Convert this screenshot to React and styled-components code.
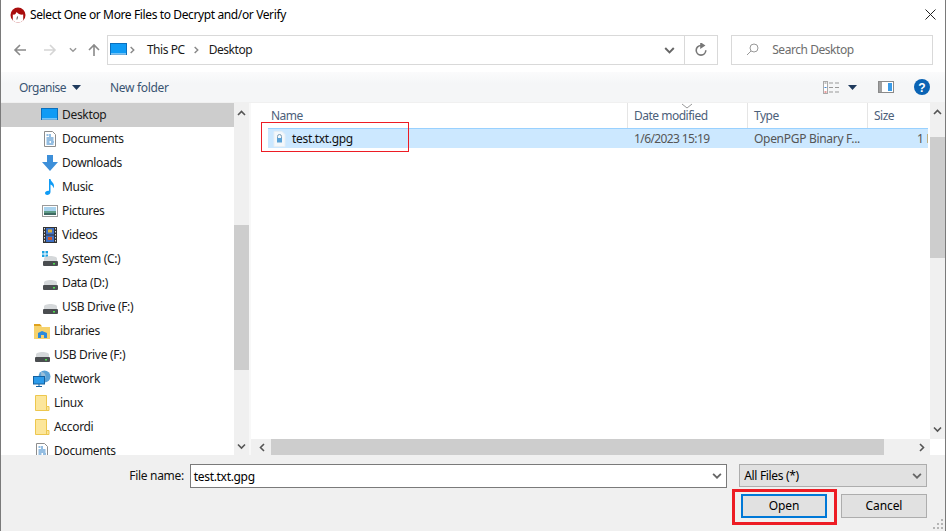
import React from 'react';
import styled, { createGlobalStyle } from 'styled-components';

const Global = createGlobalStyle`
  html, body { margin: 0; padding: 0; background: #fff; }
  * { box-sizing: border-box; }
  body { font-family: "Noto Sans", "Open Sans", "Liberation Sans", sans-serif; font-size: 12px; color: #000; }
`;

const Win = styled.div`
  position: relative; width: 946px; height: 531px; overflow: hidden; background: #fff;
  border-left: 1px solid #7a7a7a; border-right: 1px solid #7a7a7a;
  display: flex; flex-direction: column;
`;
const TitleBar = styled.div`
  height: 30px; display: flex; align-items: center; padding: 0 9px 0 9px; gap: 4px;
`;
const TitleText = styled.div`flex: 1; font-size: 12px; letter-spacing: -0.38px; line-height: 30px;`;
const CloseIcon = styled.svg`width: 11px; height: 11px; margin-bottom: 2px; flex: none;`;
const NavBar = styled.div`
  height: 30px; margin-top: 5px; display: flex; align-items: center; padding-right: 12px;
`;
const NavIcons = styled.div`width: 106px; height: 30px; display: flex; align-items: center; padding-left: 12px;`;
const NavSlot = styled.div`width: ${p => p.$w}px; display: flex; align-items: center; flex: none;`;
const AddressBox = styled.div`
  width: 612px; height: 30px; border: 1px solid #d9d9d9; display: flex; align-items: center; padding-left: 2px; font-size: 12px; color: #1a1a1a;
`;
const Crumb = styled.span`margin: 0 7px 0 ${p => p.$ml}px; padding-bottom: 2px; letter-spacing: -0.45px;`;
const AddressSpacer = styled.div`flex: 1;`;
const AddressAction = styled.div`
  width: ${p => p.$w}px; height: 28px; display: flex; align-items: center; justify-content: center;
  border-left: ${p => (p.$divider ? '1px solid #d9d9d9' : 'none')};
`;
const SearchBox = styled.div`
  width: 202px; height: 30px; margin-left: 13px; border: 1px solid #d9d9d9; display: flex; align-items: center; padding: 0 0 1px 14px; gap: 13px;
  font-size: 12px; color: #6d6d6d; letter-spacing: -0.45px;
`;
const Toolbar = styled.div`
  height: 31px; margin-top: 7px; background: linear-gradient(#fbfbfc, #f5f6f7 40%); display: flex; align-items: center; padding: 0 15px 0 18px; color: #3a5472;
  border-bottom: 1px solid #f0f0f0;
`;
const ToolLabel = styled.span`display: flex; align-items: center; gap: 6px; margin-right: 29px; letter-spacing: ${p => p.$ls}px;`;
const ToolSpacer = styled.div`flex: 1;`;
const ToolIcon = styled.div`display: flex; align-items: center; margin-left: ${p => p.$ml || 0}px;`;
const Main = styled.div`height: 352px; display: flex;`;
const Sidebar = styled.div`width: 233px; overflow: hidden; flex: none;`;
const NavRow = styled.div`
  height: 24px; display: flex; align-items: center; gap: 3px; padding-left: ${p => (p.$sub ? 40 : 32)}px;
  background: ${p => (p.$active ? '#cdcdcd' : 'transparent')}; color: #1a1a1a; letter-spacing: -0.32px;
`;
const NavLabel = styled.span`padding-bottom: 2px;`;
const NavGlyph = styled.svg`width: 18px; height: 18px; flex: none;`;
const VScroll = styled.div`
  width: 15px; flex: none; background: #f0f0f0; display: flex; flex-direction: column; height: ${p => p.$h}px;
`;
const ScrollEnd = styled.div`height: ${p => p.$h || 15}px; flex: none; display: flex; align-items: center; justify-content: center;`;
const ScrollGap = styled.div`height: ${p => p.$h}px; flex: none;`;
const ScrollThumb = styled.div`height: ${p => p.$h}px; background: #cdcdcd; flex: none;`;
const Sash = styled.div`width: 2px; flex: none; background: #f8f8f8;`;
const FilePane = styled.div`flex: 1; display: flex; min-width: 0;`;
const FileBody = styled.div`flex: 1; min-width: 0; display: flex; flex-direction: column; overflow: hidden;`;
const Header = styled.div`height: 25px; display: flex; padding-left: 14px; color: #4c607a; letter-spacing: -0.5px; flex: none;`;
const HeadCell = styled.div`
  position: relative; width: ${p => p.$w}px; padding: 4px 0 0 ${p => p.$pl}px; height: 25px; flex: none;
  border-right: ${p => (p.$last ? 'none' : '1px solid #e5e5e5')}; line-height: 18px;
`;
const SortMark = styled.svg`position: absolute; left: 53px; top: 0; width: 12px; height: 6px;`;
const FileRow = styled.div`
  height: 20px; margin-left: 17px; width: 660px; background: #cce8ff; border-top: 1px solid #99d1ff; display: flex; align-items: center; flex: none; color: #555;
`;
const FileName = styled.div`width: 359px; display: flex; align-items: center; gap: 6px; padding-left: 5px; color: #111; letter-spacing: -0.32px;`;
const FileCell = styled.div`
  width: ${p => p.$w}px; padding-left: ${p => p.$pl || 7}px; white-space: nowrap; overflow: hidden; flex: none; letter-spacing: ${p => p.$ls || -0.3}px;
`;
const FileFill = styled.div`flex: 1;`;
const HScroll = styled.div`
  height: 16px; background: #f0f0f0; display: flex; align-items: center; padding-left: 3px; flex: none;
`;
const HEnd = styled.div`width: 17px; height: 16px; display: flex; align-items: center; justify-content: center; flex: none;`;
const HThumb = styled.div`width: 613px; height: 16px; background: #cdcdcd; flex: none;`;
const Footer = styled.div`
  flex: 1; background: #f0f0f0; display: flex; flex-direction: column; padding: 9px 18px 0 0; position: relative;
`;
const FieldRow = styled.div`display: flex; align-items: flex-start; letter-spacing: -0.32px;`;
const FieldLabel = styled.div`width: 183px; text-align: right; line-height: 23px; color: #111;`;
const NameInput = styled.div`
  width: 538px; height: 24px; margin-left: 6px; background: #fff; border: 1px solid #7a7a7a; display: flex; align-items: center; justify-content: space-between; padding: 0 4px 0 3px;
`;
const FilterSelect = styled.div`
  width: 188px; height: 23px; margin-left: 12px; background: #e1e1e1; border: 1px solid #adadad; display: flex; align-items: center; justify-content: space-between; padding: 0 4px;
`;
const ButtonRow = styled.div`display: flex; align-items: flex-start; justify-content: flex-end; padding-top: 1px;`;
const Highlight = styled.div`border: 3px solid #ed1c24; padding: 2px 7px 4px 6px; margin-right: 4px;`;
const Btn = styled.div`
  width: 86px; height: 24px; background: #e1e1e1; border: ${p => (p.$primary ? '2px solid #0078d7' : '1px solid #adadad')};
  display: flex; align-items: center; justify-content: center; letter-spacing: -0.1px; padding-bottom: 2px; margin-top: ${p => p.$mt || 0}px;
`;
const Grip = styled.svg`position: absolute; right: 1px; bottom: 1px; width: 11px; height: 11px;`;
const RedBox = styled.div`position: absolute; left: 260px; top: 122px; width: 148px; height: 30px; border: 1px solid #ed1c24;`;

const Chev = ({ d = 'down', c = '#444', w = 9 }) => {
  const paths = { down: 'M1 2.5l3.5 3.5 3.5-3.5', up: 'M1 6l3.5-3.5L8 6', left: 'M6 1L2.5 4.5 6 8', right: 'M3 1l3.5 3.5L3 8' };
  return <svg width={w} height={w} viewBox="0 0 9 9" fill="none" stroke={c} strokeWidth="1.6"><path d={paths[d]} /></svg>;
};
const Arrow = ({ rot = 0, c = '#8a8a8a' }) => (
  <svg width="14" height="14" viewBox="0 0 14 14" fill="none" stroke={c} strokeWidth="1.6" style={{ transform: `rotate(${rot}deg)`, flex: 'none' }}>
    <path d="M13 7H2M7 2L2 7l5 5" />
  </svg>
);

const Desktop = ({ w = 18 }) => (
  <svg width={w} height="14" viewBox="0 0 18 14" style={{ flex: 'none' }}>
    <rect x="0.5" y="0.5" width="16" height="11" fill="#0f9bf5" stroke="#0a6fbd" />
    <rect x="1" y="10.5" width="15" height="1" fill="#d7eefc" />
  </svg>
);
const DocIcon = () => (
  <NavGlyph viewBox="0 0 18 18">
    <path d="M3.5 1.5h8l3 3v12h-11z" fill="#fff" stroke="#8d8d8d" />
    <path d="M5.5 5h2M9 4v3M5.5 8h7M5.5 10h7M5.5 12h3M10 12h3M5.5 14h7" stroke="#2b7cc4" strokeWidth="1" />
  </NavGlyph>
);
const DownIcon = () => (
  <NavGlyph viewBox="0 0 18 18">
    <path d="M6 1h6v7h5l-8 9-8-9h5z" fill="#3d8fd9" />
  </NavGlyph>
);
const MusicIcon = () => (
  <NavGlyph viewBox="0 0 18 18">
    <path d="M8 1h1.5c.3 2.5 3.5 3.5 3.5 7 0 1-.3 1.6-.7 2.2.1-2-1.5-3.4-2.8-3.8V14c0 2-1.8 3-3.3 3C5 17 4 16 4 15c0-1.5 1.8-2.6 4-2.3z" fill="#0f9bf5" />
  </NavGlyph>
);
const PicIcon = () => (
  <NavGlyph viewBox="0 0 18 18">
    <rect x="1.5" y="3.5" width="15" height="11" fill="#fff" stroke="#9a9a9a" />
    <rect x="3" y="5" width="12" height="4" fill="#a9d3ee" />
    <rect x="3" y="9" width="12" height="2" fill="#5f9c88" />
    <rect x="3" y="11" width="12" height="2" fill="#3f6a63" />
  </NavGlyph>
);
const VideoIcon = () => (
  <NavGlyph viewBox="0 0 18 18">
    <rect x="2" y="1" width="14" height="16" fill="#333" />
    <rect x="5" y="2" width="8" height="6.5" fill="#3e6fc4" />
    <rect x="5" y="9.5" width="8" height="6.5" fill="#3e6fc4" />
    <rect x="7" y="3.5" width="4" height="3" fill="#d8b13a" />
    <rect x="7" y="11" width="4" height="3" fill="#c9562a" />
    <path d="M3.5 2v14M14.500 2v14" stroke="#ddd" strokeDasharray="1.500 1.500" />
  </NavGlyph>
);
const DriveIcon = ({ win }) => (
  <NavGlyph viewBox="0 0 18 18">
    {win && <path d="M1 1h2.500v2.500H1zM4.500 1H7v2.500H4.500zM1 4.500h2.500V7H1zM4.500 4.500H7V7H4.500z" fill="#1ba1e2" />}
    <path d="M3 8.500C3 7 6 6 9.500 6S16 7 16 8.500V11H3z" fill="#d5d8da" />
    <rect x="2" y="11" width="15" height="5" rx="1" fill="#4a4d50" />
    <rect x="12" y="13" width="2" height="1.500" fill="#4ee04e" />
  </NavGlyph>
);
const LibIcon = () => (
  <NavGlyph viewBox="0 0 18 18">
    <path d="M1 3h7l1 2h8v12H1z" fill="#f6d26c" />
    <path d="M1 2h6l1.500 2H1z" fill="#dfa11c" />
    <path d="M5 16v-5l4-2 5 2v5h-3v-3H8v3z" fill="#2a8adb" />
  </NavGlyph>
);
const NetIcon = () => (
  <NavGlyph viewBox="0 0 18 18">
    <circle cx="11.500" cy="6.500" r="6" fill="#5aa2d6" />
    <path d="M8 2c3 0 5 2 4.500 6-1 1-3 1-4 .5z" fill="#9bbfd9" />
    <rect x="0.500" y="6.500" width="11" height="7.500" fill="#2d9bea" stroke="#14609f" />
    <path d="M6 14v2M3 16.500h6" stroke="#14609f" />
  </NavGlyph>
);
const FolderIcon = () => (
  <NavGlyph viewBox="0 0 18 18">
    <path d="M2.500 1.500h11v11l2.500 0v4H2.500z" fill="#fce69b" stroke="#edc74e" />
    <path d="M13.500 12.500v4" stroke="#edc74e" />
  </NavGlyph>
);
const AppLogo = () => (
  <svg width="16" height="16" viewBox="0 0 16 16" style={{ flex: 'none' }}>
    <circle cx="8" cy="8" r="7.500" fill="#a90d0d" />
    <path d="M2.800 7.500C4.500 8 6 7 6.500 5 8 7 11 8 13.200 7.500V13.500a7.500 7.500 0 0 1-10.400 0z" fill="#fff" />
    <path d="M7.500 9.500l-.6 3" stroke="#555" />
  </svg>
);
const LockFile = () => (
  <svg width="13" height="16" viewBox="0 0 13 16" style={{ flex: 'none' }}>
    <path d="M1 .5h8l3 3v12H1z" fill="#f4f8fb" stroke="#e6eef4" />
    <path d="M4.500 7V5.500a2 2 0 0 1 4 0V7" fill="none" stroke="#7d9db5" />
    <rect x="4" y="7" width="5" height="4.500" fill="#5aa2d6" />
  </svg>
);

const places = [
  ['Desktop', <NavGlyph viewBox="0 0 18 18" key="a"><rect x="0.500" y="2.500" width="16" height="11" fill="#0f9bf5" stroke="#0a6fbd" /><rect x="1" y="12.500" width="15" height="1" fill="#d7eefc" /></NavGlyph>, true, true],
  ['Documents', <DocIcon key="a" />, true],
  ['Downloads', <DownIcon key="a" />, true],
  ['Music', <MusicIcon key="a" />, true],
  ['Pictures', <PicIcon key="a" />, true],
  ['Videos', <VideoIcon key="a" />, true],
  ['System (C:)', <DriveIcon win key="a" />, true],
  ['Data (D:)', <DriveIcon key="a" />, true],
  ['USB Drive (F:)', <DriveIcon key="a" />, true],
  ['Libraries', <LibIcon key="a" />],
  ['USB Drive (F:)', <DriveIcon key="a" />],
  ['Network', <NetIcon key="a" />],
  ['Linux', <FolderIcon key="a" />],
  ['Accordi', <FolderIcon key="a" />],
  ['Documents', <DocIcon key="a" />],
];

export default function App() {
  return (
    <Win>
      <Global />
      <TitleBar>
        <AppLogo />
        <TitleText>Select One or More Files to Decrypt and/or Verify</TitleText>
        <CloseIcon viewBox="0 0 11 11" stroke="#222" strokeWidth="1"><path d="M.5.500l10 10M10.500.500l-10 10" /></CloseIcon>
      </TitleBar>
      <NavBar>
        <NavIcons>
          <NavSlot $w={30}><Arrow /></NavSlot>
          <NavSlot $w={26}><Arrow rot={180} c="#d5d5d5" /></NavSlot>
          <NavSlot $w={18}><Chev c="#999" w={8} /></NavSlot>
          <NavSlot $w={14}><Arrow rot={90} /></NavSlot>
        </NavIcons>
        <AddressBox>
          <Desktop />
          <Chev d="right" c="#888" w={8} />
          <Crumb $ml={11}>This PC</Crumb>
          <Chev d="right" c="#888" w={8} />
          <Crumb $ml={9}>Desktop</Crumb>
          <AddressSpacer />
          <AddressAction $w={30}><Chev c="#666" w={11} /></AddressAction>
          <AddressAction $w={33} $divider>
            <svg width="14" height="14" viewBox="0 0 14 14" fill="none" stroke="#777" strokeWidth="1.600"><path d="M7 2.500a4.800 4.800 0 1 0 4.800 4.800" /><path d="M7 .5l3 2-3 2z" fill="#777" /></svg>
          </AddressAction>
        </AddressBox>
        <SearchBox>
          <svg width="13" height="13" viewBox="0 0 13 13" fill="none" stroke="#999" strokeWidth="1"><circle cx="8" cy="5" r="4" /><path d="M5 8l-4 4" /></svg>
          <span>Search Desktop</span>
        </SearchBox>
      </NavBar>
      <Toolbar>
        <ToolLabel $ls={-0.55}>Organise
          <svg width="9" height="5" viewBox="0 0 9 5"><path d="M0 0h9L4.500 5z" fill="#1f3a5c" /></svg>
        </ToolLabel>
        <ToolLabel $ls={-0.3}>New folder</ToolLabel>
        <ToolSpacer />
        <ToolIcon>
          <svg width="17" height="13" viewBox="0 0 17 13">
            <rect x=".5" y=".5" width="4" height="12" fill="#fff" stroke="#aaa" />
            <path d="M1.500 2h2" stroke="#888" /><path d="M1.500 6.500h2" stroke="#3b86d6" /><path d="M1.500 11h2" stroke="#d13a3a" />
            <path d="M6 2h4M12 2h4M6 6.500h4M12 6.500h4M6 11h4M12 11h4" stroke="#999" />
          </svg>
        </ToolIcon>
        <ToolIcon $ml={8}>
          <svg width="9" height="5" viewBox="0 0 9 5"><path d="M0 0h9L4.500 5z" fill="#1f3a5c" /></svg>
        </ToolIcon>
        <ToolIcon $ml={21}>
          <svg width="16" height="12" viewBox="0 0 16 12">
            <rect x=".5" y=".5" width="15" height="11" fill="#fff" stroke="#8a8a8a" />
            <rect x="1" y="1" width="3" height="10" fill="#a0a0a0" />
            <rect x="10" y="2" width="4" height="8" fill="#3a9be8" />
          </svg>
        </ToolIcon>
        <ToolIcon $ml={20}>
          <svg width="16" height="16" viewBox="0 0 16 16">
            <circle cx="8" cy="8" r="8" fill="#0a63b4" />
            <text x="8" y="12.500" fontSize="12" fontWeight="700" fill="#fff" textAnchor="middle" fontFamily="Liberation Sans">?</text>
          </svg>
        </ToolIcon>
      </Toolbar>
      <Main>
        <Sidebar>
          {places.map(([label, icon, sub, active], i) => (
            <NavRow key={i} $sub={sub} $active={active}>{icon}<NavLabel>{label}</NavLabel></NavRow>
          ))}
        </Sidebar>
        <VScroll $h={352}>
          <ScrollEnd $h={20}><Chev d="up" c="#555" /></ScrollEnd>
          <ScrollGap $h={102} />
          <ScrollThumb $h={145} />
          <ScrollGap $h={68} />
          <ScrollEnd $h={17}><Chev c="#555" /></ScrollEnd>
        </VScroll>
        <Sash />
        <FilePane>
          <FileBody>
            <Header>
              <HeadCell $w={363} $pl={6}>Name</HeadCell>
              <HeadCell $w={120} $pl={6}>
                <SortMark viewBox="0 0 12 6" fill="none" stroke="#999"><path d="M1 1l5 4 5-4" /></SortMark>
                Date modified
              </HeadCell>
              <HeadCell $w={120} $pl={6}>Type</HeadCell>
              <HeadCell $w={60} $pl={6} $last>Size</HeadCell>
            </Header>
            <FileRow>
              <FileName><LockFile /><span>test.txt.gpg</span></FileName>
              <FileCell $w={120} $ls={-0.6}>1/6/2023 15:19</FileCell>
              <FileCell $w={120}>OpenPGP Binary F...</FileCell>
              <FileCell $w={61} $pl={50}>1 KB</FileCell>
              <FileFill />
            </FileRow>
            <FileFill />
            <HScroll>
              <HEnd><Chev d="left" c="#555" /></HEnd>
              <HThumb />
              <FileFill />
              <HEnd><Chev d="right" c="#555" /></HEnd>
            </HScroll>
          </FileBody>
          <VScroll $h={336}>
            <ScrollEnd $h={18}><Chev d="up" c="#555" /></ScrollEnd>
            <ScrollGap $h={16} />
            <ScrollThumb $h={121} />
            <ScrollGap $h={162} />
            <ScrollEnd $h={19}><Chev c="#555" /></ScrollEnd>
          </VScroll>
        </FilePane>
      </Main>
      <Footer>
        <FieldRow>
          <FieldLabel>File name:</FieldLabel>
          <NameInput><span>test.txt.gpg</span><Chev c="#666" w={10} /></NameInput>
          <FilterSelect><span>All Files (*)</span><Chev c="#666" w={10} /></FilterSelect>
        </FieldRow>
        <ButtonRow>
          <Highlight><Btn $primary>Open</Btn></Highlight>
          <Btn $mt={5}>Cancel</Btn>
        </ButtonRow>
        <Grip viewBox="0 0 11 11" fill="#b5b5b5">
          <rect x="8" y="0" width="2" height="2" /><rect x="4" y="4" width="2" height="2" /><rect x="8" y="4" width="2" height="2" />
          <rect x="0" y="8" width="2" height="2" /><rect x="4" y="8" width="2" height="2" /><rect x="8" y="8" width="2" height="2" />
        </Grip>
      </Footer>
      <RedBox />
    </Win>
  );
}
